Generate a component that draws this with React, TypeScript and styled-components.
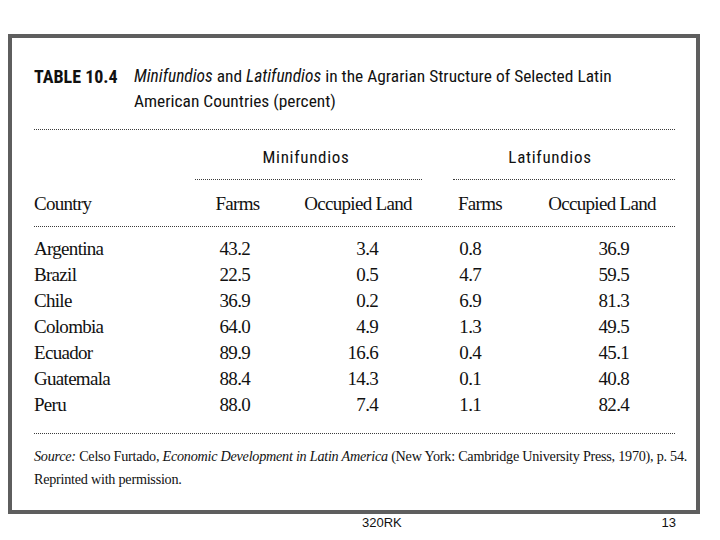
import React from 'react'
import styled, { createGlobalStyle } from 'styled-components'

const GlobalStyle = createGlobalStyle`
  body {
    margin: 0;
    background: #ffffff;
    color: #111111;
  }
`

const Page = styled.div`
  width: 720px;
  height: 540px;
  padding: 34px 0 0 8px;
  box-sizing: border-box;
`

const Frame = styled.div`
  width: 692px;
  height: 480px;
  box-sizing: border-box;
  border: 4px solid #5e5e5e;
  padding: 26px 21px 0 22px;
  display: flex;
  flex-direction: column;
`

const TitleRow = styled.div`
  display: flex;
  font-family: 'Roboto Condensed', 'Liberation Sans', sans-serif;
  font-size: 17.4px;
  line-height: 25px;
`

const TableLabel = styled.div`
  width: 100px;
  flex: none;
  font-size: 18px;
  font-weight: 700;
`

const TitleText = styled.div`
  em {
    font-style: italic;
  }
`

const Rule = styled.div<{ $top: number }>`
  margin-top: ${p => p.$top}px;
  border-top: 1px dotted #3c3c3c;
  height: 0;
`

const Columns = styled.div`
  display: grid;
  grid-template-columns: 161px 85px 142px 116px 137px;
`

const GroupRow = styled(Columns)`
  margin-top: 15px;
`

const Group = styled.div<{ $span: string; $left: number }>`
  grid-column: ${p => p.$span};
  margin-left: ${p => p.$left}px;
  display: flex;
  flex-direction: column;
`

const GroupTitle = styled.div<{ $shift: number }>`
  font-family: 'Roboto Condensed', 'Liberation Sans', sans-serif;
  font-size: 17px;
  letter-spacing: 0.7px;
  line-height: 24px;
  text-align: center;
  padding-right: ${p => p.$shift}px;
`

const GroupRule = styled.div`
  margin-top: 10px;
  border-top: 1px dotted #3c3c3c;
`

const serif = `
  font-family: 'Liberation Serif', 'Times New Roman', serif;
  font-size: 19px;
  letter-spacing: -0.7px;
`

const HeadRow = styled(Columns)`
  ${serif}
  margin-top: 12px;
  line-height: 24px;
`

const HeadCell = styled.div<{ $align: 'left' | 'center'; $padL?: number; $padR?: number }>`
  text-align: ${p => p.$align};
  padding-left: ${p => p.$padL ?? 0}px;
  padding-right: ${p => p.$padR ?? 0}px;
`

const Body = styled.div`
  ${serif}
  margin-top: 9px;
`

const DataRow = styled(Columns)`
  line-height: 26px;
`

const Name = styled.div``

const Num = styled.div<{ $pad: number }>`
  text-align: right;
  padding-right: ${p => p.$pad}px;
`

const Source = styled.p`
  margin: 11px 0 0;
  font-family: 'Liberation Serif', 'Times New Roman', serif;
  font-size: 14.2px;
  line-height: 23px;
  letter-spacing: -0.25px;
  white-space: nowrap;
`

const Footer = styled.div`
  width: 692px;
  display: flex;
  justify-content: space-between;
  padding: 1px 24px 0 354px;
  box-sizing: border-box;
  font-family: 'Liberation Sans', Arial, sans-serif;
  font-size: 13px;
  line-height: 16px;
`

type Row = [string, string, string, string, string]

const rows: Row[] = [
  ['Argentina', '43.2', '3.4', '0.8', '36.9'],
  ['Brazil', '22.5', '0.5', '4.7', '59.5'],
  ['Chile', '36.9', '0.2', '6.9', '81.3'],
  ['Colombia', '64.0', '4.9', '1.3', '49.5'],
  ['Ecuador', '89.9', '16.6', '0.4', '45.1'],
  ['Guatemala', '88.4', '14.3', '0.1', '40.8'],
  ['Peru', '88.0', '7.4', '1.1', '82.4'],
]

const numPad = [30, 44, 57, 46]

const App = () => (
  <Page>
    <GlobalStyle />
    <Frame>
      <TitleRow>
        <TableLabel>TABLE 10.4</TableLabel>
        <TitleText>
          <em>Minifundios</em> and <em>Latifundios</em> in the Agrarian Structure of Selected Latin
          <br />
          American Countries (percent)
        </TitleText>
      </TitleRow>
      <Rule $top={15} />
      <GroupRow>
        <Group $span='2 / 4' $left={0}>
          <GroupTitle $shift={5}>Minifundios</GroupTitle>
          <GroupRule />
        </Group>
        <Group $span='4 / 6' $left={31}>
          <GroupTitle $shift={28}>Latifundios</GroupTitle>
          <GroupRule />
        </Group>
      </GroupRow>
      <HeadRow>
        <HeadCell $align='left'>Country</HeadCell>
        <HeadCell $align='center'>Farms</HeadCell>
        <HeadCell $align='center' $padL={14}>
          Occupied Land
        </HeadCell>
        <HeadCell $align='center'>Farms</HeadCell>
        <HeadCell $align='center' $padR={9}>
          Occupied Land
        </HeadCell>
      </HeadRow>
      <Rule $top={10} />
      <Body>
        {rows.map(([name, ...nums]) => (
          <DataRow key={name}>
            <Name>{name}</Name>
            {nums.map((n, i) => (
              <Num key={i} $pad={numPad[i]}>
                {n}
              </Num>
            ))}
          </DataRow>
        ))}
      </Body>
      <Rule $top={15} />
      <Source>
        <em>Source:</em> Celso Furtado, <em>Economic Development in Latin America</em> (New York: Cambridge
        University Press, 1970), p. 54.
        <br />
        Reprinted with permission.
      </Source>
    </Frame>
    <Footer>
      <span>320RK</span>
      <span>13</span>
    </Footer>
  </Page>
)

export default App
